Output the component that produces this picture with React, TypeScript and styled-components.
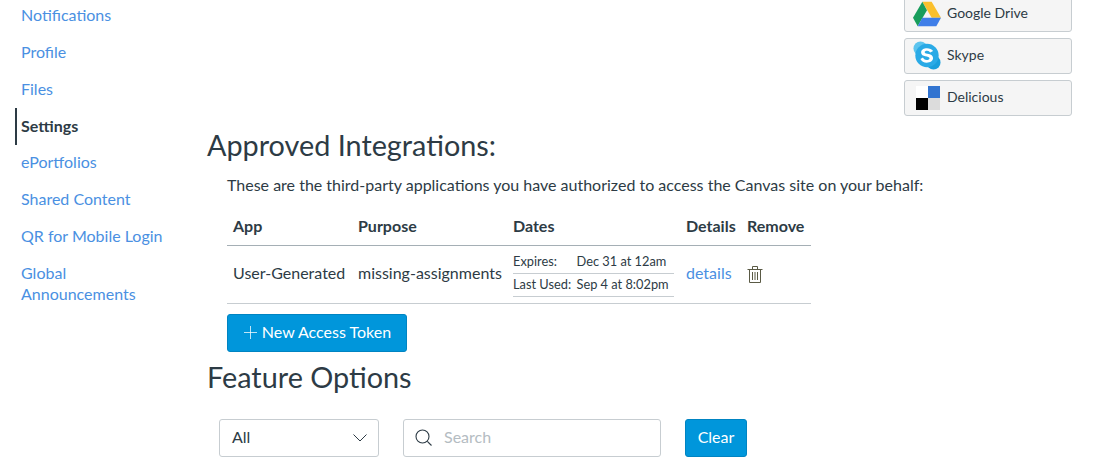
import React from "react";
import styled, { createGlobalStyle } from "styled-components";

const GlobalStyle = createGlobalStyle`
    html, body {
        margin: 0;
        padding: 0;
        height: 469px;
        overflow: hidden;
        background: #fff;
        color: #2d3b45;
        font-family: Lato, "Liberation Sans", sans-serif;
        font-size: 16px;
    }
`;

const Page = styled.div`
    display: flex;
    width: 1111px;
    height: 469px;
    overflow: hidden;
`;

const Sidebar = styled.nav`
    width: 207px;
    flex: none;
    display: flex;
    flex-direction: column;
    padding: 0 0 0 15px;
    margin-top: -2.3px;
    box-sizing: border-box;
`;

const NavItem = styled.a<{ $active?: boolean }>`
    display: block;
    width: 150px;
    padding: 7.5px 0 8.5px 4px;
    line-height: 20.8px;
    font-size: 16px;
    color: ${(p) => (p.$active ? "#2d3b45" : "#4a90e2")};
    font-weight: ${(p) => (p.$active ? 700 : 400)};
    border-left: 2px solid ${(p) => (p.$active ? "#2d3b45" : "transparent")};
`;

const Main = styled.main`
    flex: none;
    width: 865px;
    display: flex;
    flex-direction: column;
`;

const ServiceColumn = styled.div`
    display: flex;
    flex-direction: column;
    align-items: flex-end;
    gap: 6px;
    margin-top: -4px;
`;

const ServiceButton = styled.div`
    width: 168px;
    height: 36px;
    box-sizing: border-box;
    display: flex;
    align-items: center;
    gap: 6px;
    padding-left: 8px;
    background: #f5f5f5;
    border: 1px solid #c7cdd1;
    border-radius: 3px;
    font-size: 14px;
    color: #2d3b45;
`;

const ServiceLabel = styled.span`
    margin-bottom: 4px;
`;

const IconBox = styled.span`
    display: flex;
    width: 28px;
    height: 28px;
    flex: none;
    align-items: center;
    justify-content: center;
`;

const Title = styled.h2`
    margin: 0;
    font-size: 28.8px;
    line-height: 36px;
    font-weight: 400;
    color: #2d3b45;
`;

const ApprovedTitle = styled(Title)`
    margin-top: 11px;
`;

const Section = styled.section`
    padding-left: 20px;
`;

const Intro = styled.p`
    margin: 10px 0 0;
    font-size: 16px;
    line-height: 24px;
`;

const Table = styled.table`
    border-collapse: collapse;
    table-layout: fixed;
    width: 584px;
    margin-top: 10px;
    font-size: 16px;
`;

const Head = styled.th<{ $width: number }>`
    width: ${(p) => p.$width}px;
    box-sizing: border-box;
    text-align: left;
    font-weight: 700;
    height: 38px;
    padding: 0 6px;
    border-bottom: 1px solid #a5afb5;
    white-space: nowrap;
`;

const Cell = styled.td`
    height: 58px;
    box-sizing: border-box;
    padding: 0 6px 3px;
    border-bottom: 1px solid #c7cdd1;
    white-space: nowrap;
`;

const DateCell = styled(Cell)`
    padding-bottom: 1px;
`;

const DateList = styled.div`
    display: grid;
    grid-template-columns: 63.5px auto;
    font-size: 12.8px;
`;

const DateLine = styled.div`
    grid-column: 1 / 3;
    display: grid;
    grid-template-columns: subgrid;
    height: 22px;
    line-height: 21px;
    border-bottom: 1px solid #c7cdd1;
`;

const Link = styled.a`
    color: #4a90e2;
`;

const TrashButton = styled.span`
    display: inline-flex;
    vertical-align: middle;
    color: #5a5a45;
`;

const PrimaryButton = styled.div<{ $wide?: boolean }>`
    display: inline-flex;
    align-items: center;
    justify-content: center;
    gap: 5px;
    box-sizing: border-box;
    height: 38px;
    width: ${(p) => (p.$wide ? "180px" : "62px")};
    background: #0096db;
    border: 1px solid #0084c2;
    border-radius: 3px;
    color: #fff;
    font-size: 16px;
`;

const ControlText = styled.span`
    margin-bottom: 3px;
`;

const TokenRow = styled.div`
    margin-top: 10px;
    display: flex;
`;

const FeatureTitle = styled(Title)`
    margin-top: 7px;
`;

const Filters = styled.div`
    display: flex;
    gap: 24px;
    margin: 24px 0 0 12px;
`;

const SelectBox = styled.div`
    width: 160px;
    height: 38px;
    box-sizing: border-box;
    display: flex;
    align-items: center;
    justify-content: space-between;
    padding: 0 11px 0 12px;
    border: 1px solid #c7cdd1;
    border-radius: 3px;
    font-size: 16px;
`;

const SearchBox = styled.div`
    width: 258px;
    height: 38px;
    box-sizing: border-box;
    display: flex;
    align-items: center;
    gap: 12px;
    padding-left: 11px;
    border: 1px solid #c7cdd1;
    border-radius: 3px;
    font-size: 16px;
    color: #b4bcc2;
`;

const DriveIcon = () => (
    <svg width="30" height="26" viewBox="0 0 30 26">
        <path d="M10 0h10l10 17h-10z" fill="#fbc02d" />
        <path d="M10 0L0 17l5 9 10-17z" fill="#189d5c" />
        <path d="M5 26h20l5-9H10z" fill="#3f7ee8" />
    </svg>
);

const SkypeIcon = () => (
    <svg width="30" height="30" viewBox="0 1 30 30">
        <circle cx="8" cy="8" r="7.5" fill="#5cc4ee" />
        <circle cx="22" cy="23" r="7.5" fill="#1a9fdc" />
        <circle cx="15" cy="15.5" r="12.5" fill="#2aaae6" />
        <path
            d="M21.500 10.700c-1.300-2-3.800-3-6.500-3-3.400 0-6.300 1.500-6.300 4.500 0 5.400 9 3.200 9 6.200 0 1.100-1.200 1.900-3 1.900-2.200 0-3.200-1.200-4-2.700l-2.800 1.500c1.200 2.600 3.700 4 6.800 4 3.800 0 6.800-1.700 6.800-5 0-5.600-9-3.600-9-6.200 0-1 1.100-1.600 2.600-1.600 1.800 0 2.600 1 3.300 2z"
            fill="#fff"
        />
    </svg>
);

const DeliciousIcon = () => (
    <svg width="26" height="24" viewBox="-2 0 26 24">
        <rect x="0" y="0" width="12" height="12" fill="#fff" />
        <rect x="12" y="0" width="12" height="12" fill="#3274d0" />
        <rect x="0" y="12" width="12" height="12" fill="#000" />
        <rect x="12" y="12" width="12" height="12" fill="#dcdcdc" />
    </svg>
);

const PlusIcon = () => (
    <svg width="14" height="13" viewBox="-1 0 14 13">
        <path d="M6.5 0v13M0 6.5h13" stroke="#fff" strokeOpacity=".75" strokeWidth="1" fill="none" />
    </svg>
);

const TrashIcon = () => (
    <svg width="16" height="17" viewBox="0 0 16 17" fill="none" stroke="currentColor" strokeWidth="1">
        <path d="M.5 3.500h15M5.500 3.500V.5h5v3M2.500 3.500v13h11v-13M5.500 6v8M8 6v8M10.500 6v8" />
    </svg>
);

const ChevronIcon = () => (
    <svg width="14" height="8" viewBox="0 0 14 8" fill="none" stroke="#2d3b45" strokeWidth="1">
        <path d="M.5.5L7 7l6.500-6.500" />
    </svg>
);

const SearchIcon = () => (
    <svg width="17" height="17" viewBox="0 0 17 17" fill="none" stroke="#2d3b45" strokeWidth="1.100">
        <circle cx="7.500" cy="7.500" r="6.500" />
        <path d="M12.300 12.300l4.200 4.200" />
    </svg>
);

const navLinks = ["Notifications", "Profile", "Files", "Settings", "ePortfolios", "Shared Content", "QR for Mobile Login", "Global Announcements"];

const App = () => {
    return (
        <Page>
            <GlobalStyle />
            <Sidebar>
                {navLinks.map((name) => (
                    <NavItem key={name} $active={name === "Settings"}>
                        {name}
                    </NavItem>
                ))}
            </Sidebar>
            <Main>
                <ServiceColumn>
                    <ServiceButton>
                        <IconBox><DriveIcon /></IconBox>
                        <ServiceLabel>Google Drive</ServiceLabel>
                    </ServiceButton>
                    <ServiceButton>
                        <IconBox><SkypeIcon /></IconBox>
                        <ServiceLabel>Skype</ServiceLabel>
                    </ServiceButton>
                    <ServiceButton>
                        <IconBox><DeliciousIcon /></IconBox>
                        <ServiceLabel>Delicious</ServiceLabel>
                    </ServiceButton>
                </ServiceColumn>
                <ApprovedTitle>Approved Integrations:</ApprovedTitle>
                <Section>
                    <Intro>These are the third-party applications you have authorized to access the Canvas site on your behalf:</Intro>
                    <Table>
                        <thead>
                            <tr>
                                <Head $width={125}>App</Head>
                                <Head $width={155}>Purpose</Head>
                                <Head $width={173}>Dates</Head>
                                <Head $width={61}>Details</Head>
                                <Head $width={70}>Remove</Head>
                            </tr>
                        </thead>
                        <tbody>
                            <tr>
                                <Cell>User-Generated</Cell>
                                <Cell>missing-assignments</Cell>
                                <DateCell>
                                    <DateList>
                                        <DateLine>
                                            <span>Expires:</span>
                                            <span>Dec 31 at 12am</span>
                                        </DateLine>
                                        <DateLine>
                                            <span>Last Used:</span>
                                            <span>Sep 4 at 8:02pm</span>
                                        </DateLine>
                                    </DateList>
                                </DateCell>
                                <Cell><Link>details</Link></Cell>
                                <Cell>
                                    <TrashButton><TrashIcon /></TrashButton>
                                </Cell>
                            </tr>
                        </tbody>
                    </Table>
                    <TokenRow>
                        <PrimaryButton $wide>
                            <PlusIcon />
                            <ControlText>New Access Token</ControlText>
                        </PrimaryButton>
                    </TokenRow>
                </Section>
                <FeatureTitle>Feature Options</FeatureTitle>
                <Filters>
                    <SelectBox>
                        <ControlText>All</ControlText>
                        <ChevronIcon />
                    </SelectBox>
                    <SearchBox>
                        <SearchIcon />
                        <ControlText>Search</ControlText>
                    </SearchBox>
                    <PrimaryButton>
                        <ControlText>Clear</ControlText>
                    </PrimaryButton>
                </Filters>
            </Main>
        </Page>
    );
};

export default App;
